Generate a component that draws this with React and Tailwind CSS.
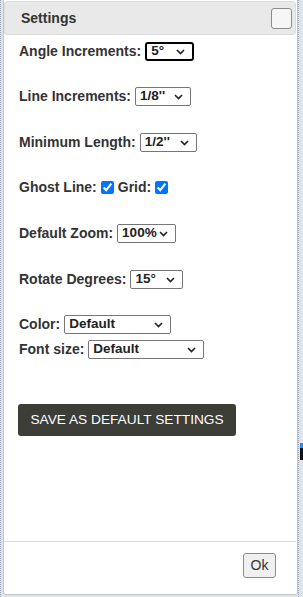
const Chevron = () => (
  <svg width="9" height="6" viewBox="0 0 9 6" className="shrink-0">
    <path d="M1 1 L4.5 4.5 L8 1" fill="none" stroke="#222" strokeWidth="1.6" />
  </svg>
);

function Select({ value, w, focused }) {
  return (
    <div
      className={
        'flex items-center justify-between h-[19px] pl-[4px] pr-[7px] bg-white text-[13.5px] font-bold text-[#222] ' +
        (focused ? 'border-2 border-black rounded-[3px] pl-[3px]' : 'border border-[#767676] rounded-[2px]')
      }
      style={{ width: w }}
    >
      <span>{value}</span>
      <Chevron />
    </div>
  );
}

function Row({ label, children, mt }) {
  return (
    <div className="flex items-center h-[19px] gap-[4px]" style={{ marginTop: mt }}>
      <span className="text-[14px] font-bold text-[#333]">{label}</span>
      {children}
    </div>
  );
}

export default function App() {
  return (
    <div className="flex h-[597px] w-[303px] overflow-hidden bg-[#dfe3ea] font-['Liberation_Sans',Arial,sans-serif]">
      {/* left strip */}
      <div className="w-[3px] shrink-0 border-l border-dotted border-[#9aa4b4]" />

      {/* dialog */}
      <div className="-mt-[2px] h-[597px] w-[295px] shrink-0 flex flex-col bg-white border border-[#c5c5c5] rounded-[3px] pt-[2px] pl-0 pr-[1px]">
        <div className="flex items-center justify-between h-[34px] bg-[#e9e9e9] border border-[#dddddd] rounded-[3px] pl-[16px] pr-[3px]">
          <span className="text-[14px] font-bold text-[#333]">Settings</span>
          <div className="w-[21px] h-[21px] border border-[#8c8c8c] rounded-[3px] bg-[#f6f6f6]" />
        </div>

        <div className="flex-1 flex flex-col items-start px-[15px]">
          <Row label="Angle Increments:" mt="7px">
            <Select value="5°" w="49px" focused />
          </Row>
          <Row label="Line Increments:" mt="26px">
            <Select value={"1/8''"} w="56px" />
          </Row>
          <Row label="Minimum Length:" mt="27px">
            <Select value={"1/2''"} w="57px" />
          </Row>
          <Row label="Ghost Line:" mt="26px">
            <input type="checkbox" defaultChecked className="w-[13px] h-[13px] accent-[#0075ff]" />
            <span className="text-[14px] font-bold text-[#333]">Grid:</span>
            <input type="checkbox" defaultChecked className="w-[13px] h-[13px] accent-[#0075ff]" />
          </Row>
          <Row label="Default Zoom:" mt="27px">
            <Select value="100%" w="59px" />
          </Row>
          <Row label="Rotate Degrees:" mt="27px">
            <Select value="15°" w="53px" />
          </Row>
          <Row label="Color:" mt="26px">
            <Select value="Default" w="107px" />
          </Row>
          <Row label="Font size:" mt="6px">
            <Select value="Default" w="116px" />
          </Row>

          <button className="mt-[45px] -ml-[1px] h-[32px] w-[218px] bg-[#3d3d38] text-white text-[13.7px] rounded-[3px]">
            SAVE AS DEFAULT SETTINGS
          </button>
        </div>

        <div className="h-[53px] border-t border-[#dddddd] flex justify-end items-start pt-[11px] pr-[20px]">
          <button className="h-[25px] w-[33px] border border-[#8c8c8c] rounded-[3px] bg-[#f0f0f0] text-[14px] text-[#333]">
            Ok
          </button>
        </div>
      </div>

      {/* right strip */}
      <div className="flex-1 flex">
        <div className="w-[2px] border-l border-dotted border-[#9aa4b4]" />
        <div className="flex-1 flex flex-col">
          <div className="h-[443px]" />
          <div className="h-[5px] bg-[#2a8cf0]" />
          <div className="h-[12px] bg-[#111]" />
        </div>
      </div>
    </div>
  );
}
